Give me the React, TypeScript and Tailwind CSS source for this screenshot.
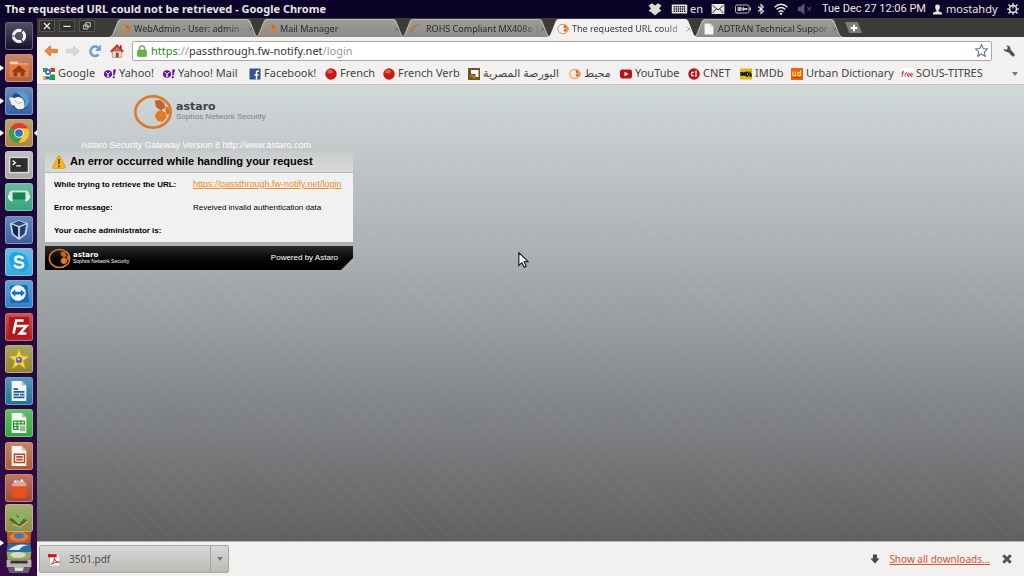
import { ReactNode } from "react";

type Box = { children?: ReactNode; className?: string };

const Icon = ({ children, className = "size-3" }: Box) => (
  <svg viewBox="0 0 24 24" className={`shrink-0 ${className}`} fill="none" aria-hidden="true">
    {children}
  </svg>
);

const Swirl = ({ className = "size-3", light = false }: { className?: string; light?: boolean }) => (
  <Icon className={className}>
    <ellipse cx="12" cy="12" rx="10.600" ry="9.400" stroke="#dc7a2c" strokeWidth="1.600" fill={light ? "#fbe9da" : "none"} />
    <path d="M13 5.200l3.200-.6 2.700 2.300.3 2.800-2.600 1.300-2.800-1.800z" fill="#bf652b" />
    <path d="M14.200 12l2.600-1.300 2.700 1.800.6 3-2.300 2.300-3-.4-1.700-2.700z" fill="#e37a22" />
    <path d="M19.600 8.200l1.800 1.400.7 3.400-1.600.8-1-1.700z" fill="#d2702b" />
  </Icon>
);

const GoogleMark = () => (
  <Icon>
    <path fill="#fff" d="M0 0h24v24H0z" />
    <path d="M0 0h10L8 8H0z" fill="#35a853" />
    <path d="M14 0h10v8h-8z" fill="#d93a2b" />
    <path d="M14 13h10v11H12z" fill="#239a45" />
    <path d="M0 15l8 2-1 7H0z" fill="#efb82a" />
    <circle cx="10" cy="8" r="6" fill="#3367d6" />
    <circle cx="10" cy="8" r="2.7" fill="#fff" />
    <path d="M5 18q5-4 8 0t-4 5q-5 0-4-5z" fill="#3367d6" />
  </Icon>
);

const YahooMark = () => (
  <Icon>
    <ellipse cx="8" cy="12" rx="8" ry="7.500" fill="#5c1391" />
    <path d="M3.500 8l4.500 4.500L12.500 8M8 12v4M5.500 16.500h5" stroke="#fff" strokeWidth="2" />
    <path d="M18.500 3H24l-3 12h-2.500z" fill="#5c1391" />
    <circle cx="19.500" cy="18.500" r="2.200" fill="#5c1391" />
  </Icon>
);

const RedBall = () => (
  <Icon>
    <circle cx="12" cy="12" r="11.500" fill="#c01d18" />
    <ellipse cx="10" cy="7" rx="6" ry="4" fill="#e8564b" />
  </Icon>
);

const bookmarks: { label: string; width: string; icon: ReactNode }[] = [
  { label: "Google", width: "w-[61px]", icon: <GoogleMark /> },
  { label: "Yahoo!", width: "w-[59px]", icon: <YahooMark /> },
  { label: "Yahoo! Mail", width: "w-[86px]", icon: <YahooMark /> },
  {
    label: "Facebook!",
    width: "w-[76px]",
    icon: (
      <Icon>
        <path fill="#36528f" d="M1 1h22v22H1z" />
        <path d="M15 23v-9h4M11 14h4V9q0-3 4-3h1" stroke="#fff" strokeWidth="3" />
      </Icon>
    ),
  },
  { label: "French", width: "w-[58px]", icon: <RedBall /> },
  { label: "French Verb", width: "w-[85px]", icon: <RedBall /> },
  {
    label: "البورصة المصرية",
    width: "w-[101px]",
    icon: (
      <Icon>
        <path fill="#75541b" d="M0 0h24v24H0z" />
        <path d="M6 4h15v14h-6v-6H6z" fill="#fff" />
        <path d="M4 16h8v5" stroke="#c6a35a" strokeWidth="2" />
      </Icon>
    ),
  },
  { label: "محيط", width: "w-[51px]", icon: <Swirl light /> },
  {
    label: "YouTube",
    width: "w-[68px]",
    icon: (
      <Icon>
        <rect y="3" width="24" height="18" rx="4" fill="#b8121b" />
        <path d="M9 7.500l8 4.500-8 4.500z" fill="#fff" />
      </Icon>
    ),
  },
  {
    label: "CNET",
    width: "w-[52px]",
    icon: (
      <Icon>
        <circle cx="12" cy="12" r="11.500" fill="#b3121d" />
        <path d="M12 9q-5-2-5 3t5 3M16 5v13" stroke="#fff" strokeWidth="2.500" />
      </Icon>
    ),
  },
  {
    label: "IMDb",
    width: "w-[51px]",
    icon: (
      <Icon>
        <path fill="#d9bd1e" d="M0 1h24v22H0z" />
        <path d="M2 8v8M5 16V8l2.500 5L10 8v8M13 8v8h2q2-1 2-4t-2-4zM20 7v9h2v-5" stroke="#111" strokeWidth="2.500" />
      </Icon>
    ),
  },
  {
    label: "Urban Dictionary",
    width: "w-[110px]",
    icon: (
      <Icon>
        <path fill="#e3651b" d="M0 0h24v24H0z" />
        <path d="M4 7v8h5V7M19 4v11h-5V9h5" stroke="#ffd75a" strokeWidth="2.500" />
        <path d="M3 19h18" stroke="#b93c12" strokeWidth="2" />
      </Icon>
    ),
  },
  {
    label: "SOUS-TITRES",
    width: "w-[90px]",
    icon: (
      <Icon>
        <path fill="#fff" d="M0 0h24v24H0z" />
        <path d="M6 6q-3-1-3 4l-1 8M1 10h5M8 17l1-7q2-1 3 0M13 14h4q0-4-2-4t-2 4 4 3M19 14h4q0-4-2-4t-2 4 4 3" stroke="#d8252c" strokeWidth="1.800" />
      </Icon>
    ),
  },
];

const Spinner = () => (
  <Icon>
    <path d="M2 20Q0 6 17 3" stroke="#c96a3c" strokeWidth="3" />
  </Icon>
);

const PageIcon = () => (
  <Icon>
    <path d="M3 1h12l6 6v16H3z" fill="#f4f4f2" stroke="#bbb" />
    <path d="M15 1v6h6" stroke="#aaa" />
  </Icon>
);

const tabs = [
  { title: "WebAdmin - User: admin -", icon: <Swirl />, active: false },
  { title: "Mail Manager", icon: <Swirl />, active: false },
  { title: "ROHS Compliant MX408e |", icon: <Spinner />, active: false },
  { title: "The requested URL could", icon: <Swirl />, active: true },
  { title: "ADTRAN Technical Suppor", icon: <PageIcon />, active: false },
];

const TopBar = () => (
  <header className="flex h-[18px] shrink-0 items-center bg-[#0c0428] px-[5px] text-[11px] text-[#e8e6e0]">
    <h1 className="min-w-0 flex-1 text-[11px] font-bold whitespace-nowrap">
      The requested URL could not be retrieved - Google Chrome
    </h1>
    <div className="flex shrink-0 items-center">
      <Icon className="mr-[9px] size-[14px]">
        <path d="M7 2l5 4 5-4 6 4-4 5 4 4-5 3-6 5-6-5-5-3 4-4-4-5z" fill="#dcdad4" />
      </Icon>
      <svg viewBox="0 0 36 22" className="h-[10px] w-[17px]" aria-hidden="true">
        <rect x="1" y="1" width="34" height="20" rx="2" fill="#e8e6e0" />
        <path d="M5 6h26M5 11h26M5 16h3M10 16h16M28 16h3" stroke="#19112f" strokeWidth="3" strokeDasharray="3 1.500" />
      </svg>
      <span className="mr-2 ml-0.5">en</span>
      <svg viewBox="0 0 28 22" className="mr-[10px] h-[10px] w-[14px]" aria-hidden="true">
        <path fill="#eceae4" d="M0 0h28v22H0z" />
        <path d="M2 3l12 10L26 3M2 20l8-9M26 20l-8-9" stroke="#19112f" strokeWidth="2" fill="none" />
      </svg>
      <svg viewBox="0 0 32 20" className="mr-[5px] h-[10px] w-4" aria-hidden="true">
        <rect x="1" y="2" width="27" height="16" rx="3" fill="none" stroke="#bbb8b5" strokeWidth="2" />
        <path d="M5 6h8v8H5zM29 7h3v6h-3zM13 10l5-5v3h7v4h-7v3z" fill="#bbb8b5" />
      </svg>
      <Icon className="mr-[7px] h-3 w-[10px]">
        <path d="M5 6l13 11-6 6V1l6 6L5 18" stroke="#e8e6e0" strokeWidth="2.500" />
      </Icon>
      <Icon className="mr-[9px] h-[14px] w-4">
        <path d="M1 9q11-10 22 0M4.500 13q7.500-7 15 0M8 17q4-4 8 0" stroke="#e8e6e0" strokeWidth="2.500" />
        <circle cx="12" cy="20" r="2" fill="#e8e6e0" />
      </Icon>
      <Icon className="mr-[10px] size-[14px]">
        <path d="M1 9h4l5-5v16l-5-5H1zM16 9l6 6M22 9l-6 6" stroke="#5a546c" strokeWidth="2" fill="#5a546c" />
      </Icon>
      <span className="mr-[9px] w-[101px] font-[Roboto,sans-serif] whitespace-nowrap">Tue Dec 27 12:06 PM</span>
      <Icon className="mr-[3px] size-[11px]">
        <path d="M12 1q6 0 5 7 0 4-3 6v2l8 3v4H2v-4l8-3v-2q-3-2-3-6-1-7 5-7z" fill="#e8e6e0" />
      </Icon>
      <span className="mr-[10px] w-[51px] whitespace-nowrap">mostahdy</span>
      <Icon className="size-3">
        <circle cx="12" cy="12" r="7" stroke="#e8e6e0" strokeWidth="3" />
        <path d="M12 0v11M12 20v4M0 12h4M20 12h4M3 3l4 4M21 3l-4 4M3 21l4-4M21 21l-4-4" stroke="#e8e6e0" strokeWidth="2.500" />
      </Icon>
    </div>
  </header>
);

const Tile = ({ name, color, arrow, children }: Box & { name: string; color: string; arrow?: boolean }) => (
  <button
    aria-label={name}
    className={`relative flex size-7 shrink-0 items-center justify-center rounded-[3px] border border-white/35 ${color}`}
  >
    <span className="absolute inset-0 rounded-[2px] bg-linear-to-b from-white/25 to-transparent" />
    {arrow && <span className="absolute top-[10px] -left-[6px] border-y-3 border-l-4 border-y-transparent border-l-white" />}
    <Icon className="relative size-[22px]">{children}</Icon>
  </button>
);

const Launcher = () => (
  <nav aria-label="Launcher" className="flex w-[37px] shrink-0 flex-col items-center bg-linear-to-b from-[#12062f] via-[#22093d] to-[#340b48] pt-1 pb-[3px]">
    <div className="flex min-h-0 flex-1 flex-col justify-between">
      <Tile name="Dash home" color="bg-[#17132e] border-white/5">
        <circle cx="12" cy="12" r="6" stroke="#f2f2f2" strokeWidth="3.600" />
        <path d="M12 12l5-8M12 12H3M12 12l5 8" stroke="#3a3650" strokeWidth="1.300" />
        <circle cx="12" cy="12" r="4" fill="#55505f" />
      </Tile>
      <Tile name="Home folder" color="bg-[#b55f3a]" arrow>
        <path d="M2 5h8l2 2h10v14H2z" fill="#f2cfb5" />
        <path d="M2 8h20v13H2z" fill="#e8793a" />
        <path d="M12 9l8 7h-2v5h-4v-4h-4v4H6v-5H4z" fill="#8f3d16" />
      </Tile>
      <Tile name="Thunderbird" color="bg-[#3665a3]" arrow>
        <circle cx="13" cy="12" r="10" fill="#1d4d8c" />
        <path d="M8 3q9-4 14 4 3 8-4 13 2-9-3-12Q12 4 8 3z" fill="#5b9bd3" />
        <path d="M1 9q3-2 6 0 4-3 8 0 3 2 3 7 1 5-5 5-4 1-6-4-4 0-4-4z" fill="#f1f0ea" />
        <path d="M7 11l4 4 6-2" stroke="#bbb" />
      </Tile>
      <div className="relative">
        <Tile name="Google Chrome" color="bg-[#ad8443]" arrow>
          <circle cx="12" cy="12" r="11" fill="#f4c62d" />
          <path d="M12 12L2.500 6.500Q6 1 12 1q7 0 10 6H12z" fill="#dd3d31" />
          <path d="M2.500 6.500Q-.5 12 2.500 18q3 5 9 5l4.500-8.500L12 12z" fill="#38a14a" />
          <path d="M2.500 6.500L8 15l4-3z" fill="#38a14a" />
          <circle cx="12" cy="12" r="5.300" fill="#eee" />
          <circle cx="12" cy="12" r="4.200" fill="#2e72c4" />
        </Tile>
        <span className="absolute top-[10px] -right-[5px] border-y-4 border-r-4 border-y-transparent border-r-white" />
      </div>
      <Tile name="Terminal" color="bg-[#a9a9a9]">
        <path d="M1 3h22v18H1z" fill="#dedede" />
        <path d="M2.500 4.500h19v15h-19z" fill="#2e2f30" />
        <path d="M5 7l3 2.500L5 12M9 13h5" stroke="#f5f5f5" strokeWidth="1.500" />
      </Tile>
      <Tile name="Network tool" color="bg-[#36a57e]">
        <rect x="1" y="5" width="22" height="10" rx="4" fill="#d9e3df" />
        <path d="M5 7h14v8H5z" fill="#16834f" />
        <path d="M1 10q0 5 4 6M23 10q0 5-4 6" stroke="#fff" strokeWidth="2" />
      </Tile>
      <Tile name="VirtualBox" color="bg-[#3c5f9f]">
        <path d="M12 1l10 4-2 12-8 6-8-6L2 5z" fill="#c3d4e4" />
        <path d="M4 6l7 3v11l-5-4z" fill="#132c4e" />
        <path d="M20 6l-7 3v11l5-4z" fill="#1e416d" />
        <path d="M5 5l7-3 7 3-7 2.500z" fill="#264b78" />
      </Tile>
      <Tile name="Skype" color="bg-[#3ea7d8]">
        <path d="M7 1q3 0 5 1 9 1 10 10 2 8-5 11-3 0-5-1Q2 21 2 12-1 3 7 1z" fill="#1fa5e3" />
        <path d="M16.500 8.500Q15 6 12 6q-4 0-4 3t4.500 3.300Q17 13 16.500 15.500 16 18 12 18q-4 0-5-3" stroke="#fff" strokeWidth="2.800" />
      </Tile>
      <Tile name="TeamViewer" color="bg-[#3182c5]">
        <path d="M2 3l19-1 2 19-20 1z" fill="#1769b4" />
        <circle cx="11" cy="11" r="8.500" fill="#f2f7fb" />
        <path d="M3.500 11l4.500-4v2.500h6V7l4.500 4-4.500 4v-2.500H8V15z" fill="#1870bd" />
      </Tile>
      <Tile name="FileZilla" color="bg-[#ad1e20]">
        <path d="M1 1h22v22H1z" fill="#b41617" />
        <path d="M6 19L9 5h8M7.500 11h7M13 11h7l-7 8h7" stroke="#fff" strokeWidth="2.800" />
      </Tile>
      <Tile name="Media editor" color="bg-[#8f852f]">
        <path d="M12 1l3 7.500 8 .5-6.200 5 2.200 8.500-7-4.800-7 4.800L7.200 14 1 9l8-.5z" fill="#f6df3d" stroke="#c9a51a" />
        <circle cx="12" cy="13" r="3.500" fill="#6e62ab" />
        <circle cx="11.500" cy="12" r="1.400" fill="#c9c3ee" />
      </Tile>
      <Tile name="Writer" color="bg-[#21739f]">
        <path d="M4 1h11l5 5v17H4z" fill="#f6f8fa" />
        <path d="M15 1v5h5" fill="#9cc3da" />
        <path d="M6 10h5M6 13h12M6 16h6M6 19h12M13 16h5" stroke="#1b5f8c" strokeWidth="1.800" />
      </Tile>
      <Tile name="Calc" color="bg-[#35a63a]">
        <path d="M4 1h11l5 5v17H4z" fill="#f6f8f5" />
        <path d="M15 1v5h5" fill="#9ed59e" />
        <path d="M6 10h12M6 13h12M6 16h6M6 19h6M6 10v9M10 10v9M14 10v4M18 10v4" stroke="#27902c" strokeWidth="1.400" />
        <path d="M13 15h6v6h-6z" fill="#9cb69b" />
      </Tile>
      <Tile name="Impress" color="bg-[#ad5b36]">
        <path d="M4 1h11l5 5v17H4z" fill="#f8f5f2" />
        <path d="M15 1v5h5" fill="#dfb69f" />
        <path d="M7 10h11v9H7z" stroke="#aa4d24" strokeWidth="1.600" />
        <path d="M9 13h7M9 16h7" stroke="#aa4d24" strokeWidth="2" />
      </Tile>
      <Tile name="Software Center" color="bg-[#a54832]">
        <path d="M4 10h16l-1 13H5z" fill="#e8511d" />
        <path d="M4 10q1-6 4-3 2-6 5-2 4-3 5 1 3 0 2 4z" fill="#d8aa99" />
        <circle cx="8" cy="5" r="1.500" fill="#eee" />
        <circle cx="15" cy="4" r="1.500" fill="#eee" />
      </Tile>
    </div>
    <div className="relative mt-[2px] flex flex-col items-center">
      <Tile name="Editor" color="bg-[#8c9145]">
        <path d="M1 14l8-5 13 6-9 7z" fill="#6d5b30" />
        <path d="M1 9l5-3 5 6L20 2l3 3-11 14z" fill="#7dbb57" />
        <path d="M6 19l7 3 9-7" stroke="#d5d9a3" />
      </Tile>
      <span className="absolute top-9 -left-[5px] border-y-3 border-l-4 border-y-transparent border-l-white" />
      <svg viewBox="0 0 28 43" className="h-[41px] w-7" aria-hidden="true">
        <path d="M1 0h26l-1 12H2z" fill="#b2592e" />
        <ellipse cx="14" cy="5" rx="10" ry="5" fill="#e6792b" />
        <ellipse cx="14" cy="4" rx="5" ry="3" fill="#3b79bd" />
        <path d="M2 12h24l1 9H1z" fill="#2b6da3" />
        <path d="M3 19q9-8 21-5-7 0-10 5z" fill="#e7eef2" />
        <path d="M1 21h26l-1 8H2z" fill="#93aa62" />
        <ellipse cx="13" cy="24" rx="8" ry="3" fill="#d9d9bf" />
        <path d="M1 29h26v8H1z" fill="#b6b4ac" />
        <path d="M5 30h18v3H5z" fill="#333" />
        <path d="M2 37h24l-2 6H4z" fill="#605f68" />
        <path d="M9 37h10l-1 4h-8z" fill="#ddd" />
      </svg>
    </div>
  </nav>
);

const WindowButton = ({ name, children }: Box & { name: string }) => (
  <button aria-label={name} className="flex h-3 w-4 items-center justify-center border border-[#55534d] bg-[#32312d]">
    <Icon className="size-2">{children}</Icon>
  </button>
);

const TabStrip = () => (
  <div className="flex h-[19px] shrink-0 items-end bg-[#3c3b37]">
    <div className="flex h-full items-start gap-1 pt-0.5 pl-0.5">
      <WindowButton name="Close">
        <path d="M3 3l18 18M21 3L3 21" stroke="#eee" strokeWidth="3.500" />
      </WindowButton>
      <WindowButton name="Minimize">
        <path d="M1 13h22" stroke="#eee" strokeWidth="3.500" />
      </WindowButton>
      <WindowButton name="Restore">
        <path d="M8 2h14v12H8zM2 9h13v12H2z" stroke="#ddd" strokeWidth="2.500" fill="#32312d" />
      </WindowButton>
    </div>
    <div role="tablist" className="ml-[14px] flex">
      {tabs.map((tab) => (
        <div
          key={tab.title}
          role="tab"
          aria-selected={tab.active}
          className={`-mr-1 h-[18px] w-[150px] p-px pb-0 [clip-path:polygon(0_100%,3px_90%,9px_8%,11px_0,calc(100%-11px)_0,calc(100%-9px)_8%,calc(100%-3px)_90%,100%_100%)] ${
            tab.active ? "z-10 bg-[#f2f1f0]" : "bg-[#b9b8b5]"
          }`}
        >
          <div
            className={`flex h-full items-center pl-[9px] [clip-path:polygon(0_100%,3px_90%,9px_8%,11px_0,calc(100%-11px)_0,calc(100%-9px)_8%,calc(100%-3px)_90%,100%_100%)] ${
              tab.active ? "bg-[#f2f1f0] text-[#3c3c3c]" : "bg-linear-to-b from-[#9c9b98] to-[#8d8c89] text-[#2c2b29]"
            }`}
          >
            {tab.icon}
            <span className="ml-[3px] w-[114px] text-[9px] leading-4 whitespace-nowrap [mask-image:linear-gradient(to_right,black_80%,#0004_98%)]">
              {tab.title}
            </span>
            <button aria-label={`Close ${tab.title}`}>
              <Icon className="size-[6px]"><path d="M2 2l20 20M22 2L2 22" stroke={tab.active ? "#aaa" : "#706f6c"} strokeWidth="4" /></Icon>
            </button>
          </div>
        </div>
      ))}
    </div>
    <button aria-label="New tab" className="mb-1 ml-[6px] flex h-[11px] w-[17px] items-center justify-center bg-[#7d7c78] [clip-path:polygon(0_0,75%_0,100%_100%,25%_100%)]">
      <Icon className="size-2"><path d="M12 2v20M2 12h20" stroke="#fff" strokeWidth="6" /></Icon>
    </button>
  </div>
);

const Toolbar = () => (
  <div className="flex h-[26px] shrink-0 items-center bg-[#f2f1f0] pt-px pr-[9px] pl-[7px]">
    <button aria-label="Back" className="mr-2">
      <Icon className="size-[14px]"><path d="M1 12L11 3v6h12v6H11v6z" fill="#eb883e" stroke="#b85c21" /></Icon>
    </button>
    <button aria-label="Forward" className="mr-2">
      <Icon className="size-[14px]"><path d="M23 12L13 3v6H1v6h12v6z" fill="#d7d6d4" stroke="#c5c4c2" /></Icon>
    </button>
    <button aria-label="Reload" className="mr-2">
      <Icon className="size-[14px]">
        <path d="M18 18a8 8 0 1 1-1-12" stroke="#6a9fd0" strokeWidth="4.500" />
        <path d="M22 1v11H12z" fill="#6a9fd0" />
      </Icon>
    </button>
    <button aria-label="Home" className="mr-2">
      <Icon className="size-[14px]">
        <path d="M4 11h16v12H4z" fill="#e7ddd0" stroke="#8c7a68" />
        <path d="M17 2h3v6h-3z" fill="#a32c26" />
        <path d="M12 1l11 11-2 2-9-9-9 9-2-2z" fill="#cc3a33" stroke="#8a211c" />
        <path d="M12 6l7 7H5z" fill="#d5615a" />
        <path d="M10 15h5v8h-5z" fill="#845330" />
      </Icon>
    </button>
    <div className="flex h-5 min-w-0 flex-1 items-center rounded-[2px] border border-[#aaa9a6] bg-white px-[3px]">
      <Icon className="size-3">
        <path d="M7 11V7q0-5 5-5t5 5v4" stroke="#8c9c85" strokeWidth="3" />
        <rect x="3" y="10" width="18" height="13" rx="2" fill="#5fb548" stroke="#3d8c2d" />
      </Icon>
      <div className="relative ml-[3px] h-[18px] flex-1 text-[11px] leading-[18px]">
        <input
          aria-label="Address"
          defaultValue="https://passthrough.fw-notify.net/login"
          className="w-full bg-transparent text-transparent outline-none"
        />
        <span aria-hidden="true" className="pointer-events-none absolute inset-0 whitespace-nowrap text-[#333]">
          <span className="text-[#1c8f1c]">https</span>
          <span className="text-[#999]">://</span>passthrough.fw-notify.net<span className="text-[#999]">/login</span>
        </span>
      </div>
      <button aria-label="Bookmark this page">
        <Icon className="size-[13px]"><path d="M12 1l3.200 7.500 8 .7-6 5.500 1.800 8-7-4.300-7 4.300 1.800-8-6-5.500 8-.7z" stroke="#60728e" strokeWidth="2" fill="#fff" /></Icon>
      </button>
    </div>
    <button aria-label="Settings" className="ml-[11px]">
      <Icon className="size-3"><path d="M1 7l5 3 4-4-3-5q7-1 8 5v3l8 9q1 3-1 5-3 0-4-1l-8-8q-7 1-9-7z" fill="#55534f" /></Icon>
    </button>
  </div>
);

const BookmarkBar = () => (
  <nav aria-label="Bookmarks" className="flex h-[22px] shrink-0 items-center border-b border-[#c3c5c5] bg-[#f2f1f0] pr-[6px] pl-[6px] text-[11px] text-[#454442]">
    {bookmarks.map((mark) => (
      <a key={mark.label} href="#" className={`flex shrink-0 items-center gap-[3px] whitespace-nowrap ${mark.width}`}>
        {mark.icon}
        {mark.label}
      </a>
    ))}
    <button aria-label="More bookmarks" className="ml-auto border-x-3 border-t-4 border-x-transparent border-t-[#777]" />
  </nav>
);

const ErrorPage = () => (
  <main className="relative min-h-0 flex-1 bg-[repeating-linear-gradient(45deg,#ffffff0d_0_1px,transparent_1px_3px),linear-gradient(to_bottom,#d1d8da,#a6abad_40%,#5d5e60)] px-2 pt-[7px] font-['Liberation_Sans',Arial,sans-serif] text-black">
    <div className="w-[308px]">
      <div className="ml-[88px] flex h-10 items-center gap-[3px]">
        <Swirl className="size-10" />
        <div>
          <p className="font-['DejaVu_Sans',sans-serif] text-[11px] leading-[10px] font-bold text-[#3e4347]">astaro</p>
          <p className="text-[8px] leading-[10px] text-[#7b8186]">Sophos Network Security</p>
        </div>
      </div>
      <p className="mt-2 h-[11px] pl-9 text-[9px] leading-[11px] whitespace-nowrap text-white">
        Astaro Security Gateway Version 8 http://www.astaro.com
      </p>
      <section>
        <h2 className="flex h-[22px] items-center border-b border-[#b5b5b5] bg-linear-to-b from-[#c9cacb] to-[#dadada] pl-[7px] text-[11px] font-bold">
          <Icon className="mr-1 size-[14px]">
            <path d="M12 1q1 0 2 2l9 17q0 3-2 3H3q-3 0-2-3L10 3q1-2 2-2z" fill="#f6b51d" stroke="#d68d12" />
            <path d="M12 7v9M12 18v3" stroke="#4b3310" strokeWidth="2.500" />
          </Icon>
          An error occurred while handling your request
        </h2>
        <table className="w-full bg-[#f1f1f2] text-left text-[8px]">
          <tbody>
            <tr className="h-[23px]">
              <th scope="row" className="w-[148px] pl-[9px]">While trying to retrieve the URL:</th>
              <td className="whitespace-nowrap">
                <a href="#" className="text-[9px] text-[#ef8a1d] underline">https://passthrough.fw-notify.net/login</a>
              </td>
            </tr>
            <tr className="h-[23px]">
              <th scope="row" className="pl-[9px]">Error message:</th>
              <td>Reveived invalid authentication data</td>
            </tr>
            <tr className="h-[23px]">
              <th scope="row" className="pl-[9px]">Your cache administrator is:</th>
              <td />
            </tr>
          </tbody>
        </table>
        <footer className="mt-1 flex h-6 items-center bg-linear-to-b from-[#2c2c2c] via-[#0a0a0a] to-black pr-[15px] pl-[3px] text-[8px] text-white [clip-path:polygon(0_0,100%_0,100%_50%,calc(100%-12px)_100%,0_100%)]">
          <Swirl className="size-[23px]" />
          <div className="ml-0.5">
            <p className="font-['DejaVu_Sans',sans-serif] text-[7px] leading-[6px] font-bold">astaro</p>
            <p className="text-[5px] leading-[6px]">Sophos Network Security</p>
          </div>
          <p className="ml-auto">Powered by Astaro</p>
        </footer>
      </section>
    </div>
    <svg viewBox="0 0 16 24" className="absolute top-[167px] left-[481px] h-4 w-[11px]" aria-hidden="true">
      <path d="M1 1v19l4.500-4 3.500 7 3-1.500-3-7h6z" fill="#fff" stroke="#222" strokeWidth="1.800" />
    </svg>
  </main>
);

const DownloadBar = () => (
  <footer className="flex h-[35px] shrink-0 items-center border-t border-[#b6b5b3] bg-[#f2f1f0] pr-3 pl-0.5 text-[10px] text-[#4c4c4c]">
    <div className="flex h-7 w-[190px] items-stretch rounded-[2px] border border-[#a9a8a5] bg-linear-to-b from-[#d8d7d5] to-[#bcbbb8]">
      <button className="flex flex-1 items-center gap-2 pl-2">
        <Icon className="size-[13px]">
          <path d="M3 0h13l6 6v18H3z" fill="#fff" stroke="#999" />
          <path d="M0 2h16v6H0z" fill="#cb1717" />
          <path d="M6 21q7-6 6-12 1 8 9 8-9-1-15 4" stroke="#cf2525" strokeWidth="1.800" />
        </Icon>
        3501.pdf
      </button>
      <button aria-label="Download options" className="flex w-[18px] items-center justify-center border-l border-[#a5a4a1]">
        <span className="border-x-3 border-t-4 border-x-transparent border-t-[#777]" />
      </button>
    </div>
    <Icon className="mr-[9px] ml-auto size-[10px]"><path d="M7 1h10v10h6L12 23 1 11h6z" fill="#4a4845" /></Icon>
    <a href="#" className="whitespace-nowrap text-[#d4532b] underline">Show all downloads...</a>
    <button aria-label="Close downloads" className="ml-3">
      <Icon className="size-[10px]"><path d="M3 3l18 18M21 3L3 21" stroke="#55534f" strokeWidth="7" /></Icon>
    </button>
  </footer>
);

export default function App() {
  return (
    <div className="flex h-screen flex-col overflow-hidden font-['Noto_Sans','DejaVu_Sans',sans-serif]">
      <TopBar />
      <div className="flex min-h-0 flex-1">
        <Launcher />
        <div className="flex min-w-0 flex-1 flex-col">
          <TabStrip />
          <Toolbar />
          <BookmarkBar />
          <ErrorPage />
          <DownloadBar />
        </div>
      </div>
    </div>
  );
}
